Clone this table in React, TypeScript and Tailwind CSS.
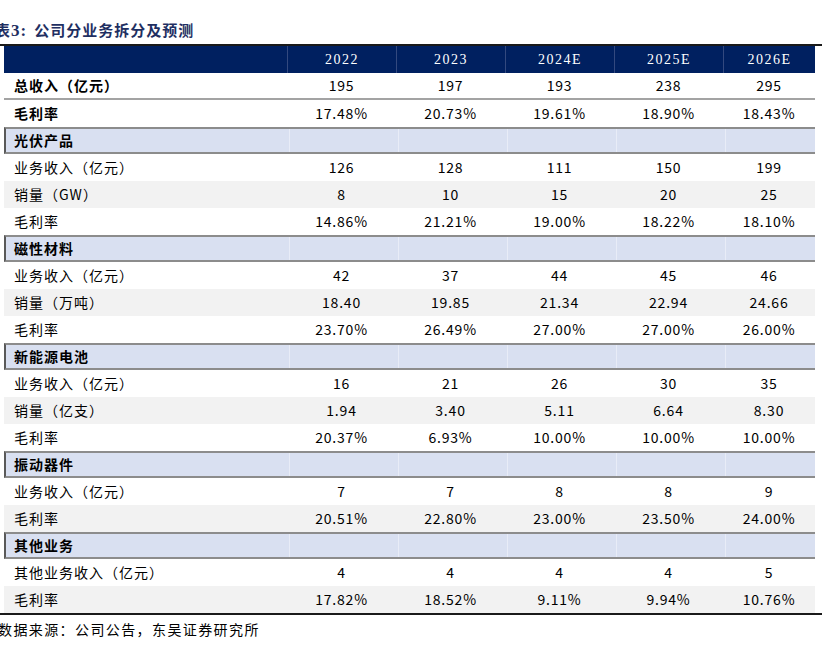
import React from "react";

type Row = { label: string; vals: string[] };
type Section = { title: string; rows: Row[] };

const years = ["2022", "2023", "2024E", "2025E", "2026E"];

const top: Row[] = [
  { label: "总收入（亿元）", vals: ["195", "197", "193", "238", "295"] },
  { label: "毛利率", vals: ["17.48%", "20.73%", "19.61%", "18.90%", "18.43%"] },
];

const sections: Section[] = [
  {
    title: "光伏产品",
    rows: [
      { label: "业务收入（亿元）", vals: ["126", "128", "111", "150", "199"] },
      { label: "销量（GW）", vals: ["8", "10", "15", "20", "25"] },
      { label: "毛利率", vals: ["14.86%", "21.21%", "19.00%", "18.22%", "18.10%"] },
    ],
  },
  {
    title: "磁性材料",
    rows: [
      { label: "业务收入（亿元）", vals: ["42", "37", "44", "45", "46"] },
      { label: "销量（万吨）", vals: ["18.40", "19.85", "21.34", "22.94", "24.66"] },
      { label: "毛利率", vals: ["23.70%", "26.49%", "27.00%", "27.00%", "26.00%"] },
    ],
  },
  {
    title: "新能源电池",
    rows: [
      { label: "业务收入（亿元）", vals: ["16", "21", "26", "30", "35"] },
      { label: "销量（亿支）", vals: ["1.94", "3.40", "5.11", "6.64", "8.30"] },
      { label: "毛利率", vals: ["20.37%", "6.93%", "10.00%", "10.00%", "10.00%"] },
    ],
  },
  {
    title: "振动器件",
    rows: [
      { label: "业务收入（亿元）", vals: ["7", "7", "8", "8", "9"] },
      { label: "毛利率", vals: ["20.51%", "22.80%", "23.00%", "23.50%", "24.00%"] },
    ],
  },
  {
    title: "其他业务",
    rows: [
      { label: "其他业务收入（亿元）", vals: ["4", "4", "4", "4", "5"] },
      { label: "毛利率", vals: ["17.82%", "18.52%", "9.11%", "9.94%", "10.76%"] },
    ],
  },
];

const grid = "grid grid-cols-[283px_109px_109px_109px_109px_92px]";
const cjk = "font-['Noto_Sans_CJK_SC',sans-serif]";

function DataRow({ row, bold, bg, border }: { row: Row; bold?: boolean; bg?: string; border?: boolean }) {
  return (
    <div className={`${grid} h-[27px] ${bg ?? "bg-white"} ${border ? "border-b-2 border-[#a3a3a3]" : ""}`}>
      <div className={`flex items-center pl-[10px] text-[14px] tracking-[1px] text-black ${bold ? "font-bold" : ""}`}>
        {row.label}
      </div>
      {row.vals.map((v, i) => (
        <div key={i} className="flex items-center justify-center text-[14px] tracking-[0.8px] text-black">
          {v}
        </div>
      ))}
    </div>
  );
}

export default function App() {
  return (
    <div className={`w-[824px] h-[651px] bg-white overflow-hidden ${cjk}`}>
      <div className="h-[44px] pt-[20px]">
        <div className="ml-[-5px] leading-[20px] text-[15px] font-bold tracking-[1px] text-[#1f2f62] whitespace-nowrap">
          表<span className="font-['Liberation_Serif',serif] text-[17px] tracking-[1px] mr-[7px]">3:</span>公司分业务拆分及预测
        </div>
      </div>
      <div className="h-[2px] w-[822px] bg-[#1a1a1a]" />
      <div className="ml-[4px] w-[811px]">
        <div className={`${grid} h-[27px] bg-[#002060]`}>
          <div />
          {years.map((y) => (
            <div
              key={y}
              className="flex items-center justify-center border-l border-[#33497f] font-['Liberation_Serif',serif] text-[14px] tracking-[1.5px] text-white"
            >
              {y}
            </div>
          ))}
        </div>
        <DataRow row={top[0]} bold border />
        <DataRow row={top[1]} bold />
        {sections.map((s) => (
          <div key={s.title}>
            <div className={`${grid} h-[27px] bg-[#d9e0f1] border-y-2 border-[#8c8c8c] border-l-2 border-l-[#595959]`}>
              <div className="flex items-center pl-[8px] text-[14px] tracking-[1px] font-bold text-black">{s.title}</div>
              {years.map((y) => (
                <div key={y} className="border-l border-[#e8ecf7]" />
              ))}
            </div>
            {s.rows.map((r, i) => (
              <DataRow key={i} row={r} bg={i % 2 === 1 ? "bg-[#f2f2f2]" : "bg-white"} />
            ))}
          </div>
        ))}
      </div>
      <div className="h-[2px] w-[822px] bg-[#1a1a1a]" />
      <div className="mt-[4px] ml-[-2px] leading-[20px] text-[14px] tracking-[1.4px] text-black whitespace-nowrap">
        数据来源：公司公告，东吴证券研究所
      </div>
    </div>
  );
}
